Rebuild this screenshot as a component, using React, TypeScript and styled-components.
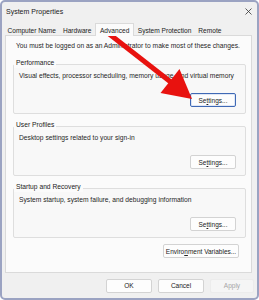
import React from "react";
import styled, { createGlobalStyle } from "styled-components";

const Global = createGlobalStyle`
  html, body { margin: 0; padding: 0; background: #fff; }
  body { font-family: "Liberation Sans", Arial, sans-serif; }
`;

const Window = styled.div`
  position: relative;
  box-sizing: border-box;
  width: 259px;
  height: 300px;
  border: 2px solid #9ba3c2;
  border-radius: 5px;
  background: #f0f0f0;
  display: flex;
  flex-direction: column;
  overflow: hidden;
  color: #1f1f1f;
  white-space: nowrap;
`;

const TitleBar = styled.div`
  box-sizing: border-box;
  height: 20px;
  display: flex;
  align-items: center;
  justify-content: space-between;
  padding: 0 5px 2px 4px;
  font-size: 7px;
  color: #1a1a1a;
`;

const Close = styled.div`
  width: 8px;
  height: 8px;
  display: flex;
  align-items: center;
  justify-content: center;
`;

const Tabs = styled.div`
  display: flex;
  align-items: flex-end;
  height: 13px;
  padding-left: 2px;
  font-size: 6.6px;
`;

const Tab = styled.div<{ $active?: boolean }>`
  box-sizing: border-box;
  height: ${(p) => (p.$active ? "13px" : "11px")};
  padding: 0 ${(p) => (p.$active ? "4px" : "2.5px")};
  display: flex;
  align-items: center;
  margin-bottom: ${(p) => (p.$active ? "-1px" : "0")};
  background: ${(p) => (p.$active ? "#fbfbfb" : "transparent")};
  border: ${(p) => (p.$active ? "1px solid #dadada" : "1px solid transparent")};
  border-bottom: none;
  position: relative;
  z-index: 1;
  color: #222;
`;

const Panel = styled.div`
  box-sizing: border-box;
  margin: 0 5px 0 3px;
  height: 238px;
  background: #fbfbfb;
  border: 1px solid #dadada;
  padding: 4px 5px 0 7px;
  display: flex;
  flex-direction: column;
  font-size: 6.7px;
`;

const Notice = styled.div`
  padding-left: 3px;
  height: 11px;
  line-height: 11px;
  margin-bottom: 13px;
`;

const Group = styled.div`
  position: relative;
  box-sizing: border-box;
  border: 1px solid #dedede;
  border-radius: 2px;
  background: #f8f8f8;
  height: 50px;
  margin-bottom: 12px;
  padding: 6px 9px 0 5px;
  display: flex;
  flex-direction: column;
`;

const Legend = styled.div`
  position: absolute;
  top: -7px;
  left: 0;
  padding: 0 2px;
  line-height: 10px;
  background: #fbfbfb;
  color: #222;
`;

const GroupText = styled.div`
  line-height: 9px;
  height: 9px;
`;

const Row = styled.div<{ $top?: number; $right?: number }>`
  display: flex;
  justify-content: flex-end;
  margin-top: ${(p) => p.$top ?? 0}px;
  margin-right: ${(p) => p.$right ?? 0}px;
`;

const Button = styled.div<{ $w: number; $focus?: boolean; $disabled?: boolean }>`
  box-sizing: border-box;
  width: ${(p) => p.$w}px;
  height: 14px;
  display: flex;
  align-items: center;
  justify-content: center;
  background: ${(p) => (p.$disabled ? "#f5f5f5" : "#fdfdfd")};
  border: 1px solid ${(p) => (p.$focus ? "#3f69b5" : p.$disabled ? "#ececec" : "#d3d3d3")};
  box-shadow: ${(p) => (p.$focus ? "inset 0 0 0 1px #dfe7f5" : "none")};
  border-radius: 2px;
  font-size: 6.5px;
  color: ${(p) => (p.$disabled ? "#a5a5a5" : "#222")};
`;

const U = styled.span`
  text-decoration: underline;
`;

const Footer = styled.div`
  flex: 1;
  display: flex;
  justify-content: flex-end;
  align-items: center;
  gap: 6px;
  padding: 0 3px 0 0;
`;

const Arrow = styled.svg`
  position: absolute;
  left: 0;
  top: 0;
  pointer-events: none;
`;

const SettingsLabel = () => (
  <span>
    Se<U>t</U>tings...
  </span>
);

export default function App() {
  return (
    <>
      <Global />
      <Window>
        <TitleBar>
          <span>System Properties</span>
          <Close>
            <svg width="7" height="7" viewBox="0 0 7 7">
              <path d="M0.5 0.5L6.5 6.5M6.5 0.5L0.5 6.5" stroke="#333" strokeWidth="0.8" />
            </svg>
          </Close>
        </TitleBar>
        <Tabs>
          <Tab>Computer Name</Tab>
          <Tab>Hardware</Tab>
          <Tab $active>Advanced</Tab>
          <Tab>System Protection</Tab>
          <Tab>Remote</Tab>
        </Tabs>
        <Panel>
          <Notice>You must be logged on as an Administrator to make most of these changes.</Notice>
          <Group>
            <Legend>Performance</Legend>
            <GroupText>Visual effects, processor scheduling, memory usage, and virtual memory</GroupText>
            <Row $top={13}>
              <Button $w={46} $focus>
                <SettingsLabel />
              </Button>
            </Row>
          </Group>
          <Group>
            <Legend>User Profiles</Legend>
            <GroupText>Desktop settings related to your sign-in</GroupText>
            <Row $top={13}>
              <Button $w={46}>
                <SettingsLabel />
              </Button>
            </Row>
          </Group>
          <Group>
            <Legend>Startup and Recovery</Legend>
            <GroupText>System startup, system failure, and debugging information</GroupText>
            <Row $top={13}>
              <Button $w={46}>
                <SettingsLabel />
              </Button>
            </Row>
          </Group>
          <Row $top={-6} $right={7}>
            <Button $w={76}>
              <span>
                Enviro<U>n</U>ment Variables...
              </span>
            </Button>
          </Row>
        </Panel>
        <Footer>
          <Button $w={46}>OK</Button>
          <Button $w={46}>Cancel</Button>
          <Button $w={44} $disabled>
            Apply
          </Button>
        </Footer>
        <Arrow width="259" height="300" viewBox="0 0 259 300">
          <line x1="97" y1="24" x2="170" y2="81" stroke="#e8120f" strokeWidth="5" />
          <polygon points="190,97 158.5,91 177.5,67" fill="#e8120f" />
        </Arrow>
      </Window>
    </>
  );
}
